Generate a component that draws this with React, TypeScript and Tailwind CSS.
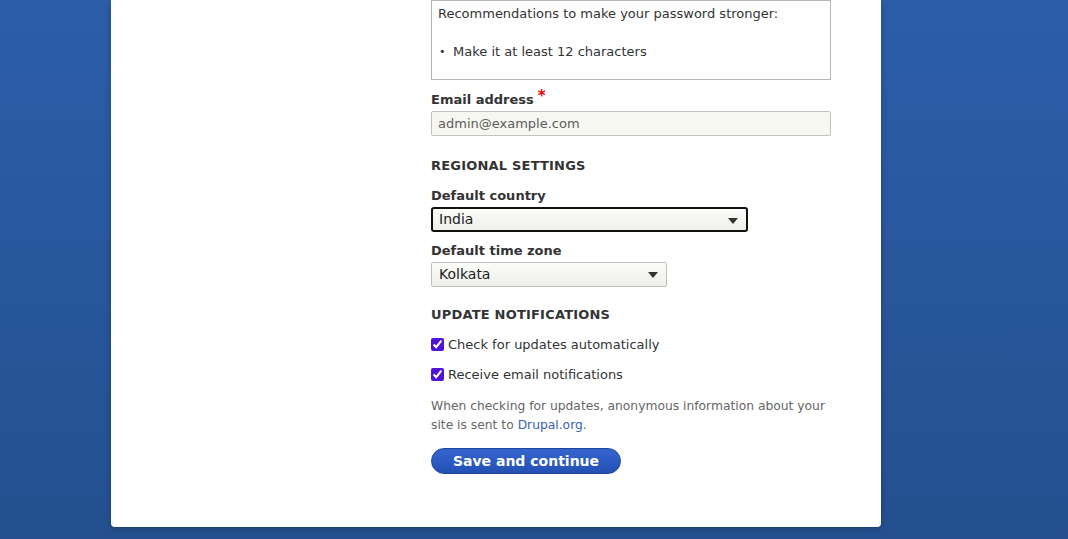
import React from "react";

const Arrow = () => (
  <svg width="10" height="6" viewBox="0 0 10 6" className="absolute right-[8px] top-[9px]">
    <path d="M0 0 L10 0 L5 6 Z" fill="#333" />
  </svg>
);

export default function App() {
  return (
    <div
      className="min-h-[539px] w-full bg-gradient-to-b from-[#2c5ea9] to-[#24508f] pb-[12px]"
      style={{ fontFamily: "'DejaVu Sans', 'Liberation Sans', sans-serif" }}
    >
      <div className="ml-[111px] w-[770px] rounded-b-[4px] bg-white pb-[53px] pl-[320px] shadow-[0_1px_6px_rgba(0,0,0,0.25)]">
        <div className="w-[400px] text-[13px] text-[#333]">
          {/* password recommendations */}
          <div className="h-[80px] border border-[#b4b4b4] px-[6px] pt-[3px] leading-[20px]">
            <p>Recommendations to make your password stronger:</p>
            <ul className="mt-[18px]">
              <li className="flex">
                <span className="ml-[1px] w-[14px] text-[11px]">•</span>
                <span>Make it at least 12 characters</span>
              </li>
            </ul>
          </div>

          {/* email */}
          <div className="mt-[11px] flex h-[18px] items-center font-bold leading-[18px]">
            Email address
            <span className="relative top-[-4px] ml-[4px] text-[15px] font-bold text-[#e00]">*</span>
          </div>
          <div className="mt-[2px] flex h-[25px] w-[400px] items-center rounded-[2px] border border-[#c2c2bd] bg-[#f7f7f2] px-[6px] text-[#5c5c5c]">
            admin@example.com
          </div>

          <div className="mt-[21px] h-[18px] font-bold uppercase leading-[18px] tracking-[0.2px]">
            Regional settings
          </div>

          <div className="mt-[12px] h-[18px] font-bold leading-[18px]">Default country</div>
          <div className="relative mt-[2px] flex h-[25px] w-[317px] items-center rounded-[3px] border-2 border-[#111] bg-gradient-to-b from-[#fcfcfa] to-[#eeeeea] px-[6px] text-[14px] text-[#222]">
            India
            <Arrow />
          </div>

          <div className="mt-[10px] h-[18px] font-bold leading-[18px]">Default time zone</div>
          <div className="relative mt-[2px] flex h-[25px] w-[236px] items-center rounded-[2px] border border-[#c0c0bb] bg-gradient-to-b from-[#fcfcfa] to-[#eeeeea] px-[7px] text-[14px] text-[#222]">
            Kolkata
            <Arrow />
          </div>

          <div className="mt-[19px] h-[18px] font-bold uppercase leading-[18px] tracking-[0.2px]">
            Update notifications
          </div>

          <label className="mt-[12px] flex h-[18px] items-center gap-[4px] leading-[18px]">
            <input type="checkbox" defaultChecked className="relative top-[-1px] m-0 h-[13px] w-[13px] accent-[#4f12d9]" />
            Check for updates automatically
          </label>
          <label className="mt-[12px] flex h-[18px] items-center gap-[4px] leading-[18px]">
            <input type="checkbox" defaultChecked className="relative top-[-1px] m-0 h-[13px] w-[13px] accent-[#4f12d9]" />
            Receive email notifications
          </label>

          <p className="mt-[13px] text-[12.3px] leading-[19px] text-[#666]">
            When checking for updates, anonymous information about your site is sent to{" "}
            <a className="text-[#3a62b6]">Drupal.org</a>.
          </p>

          <button className="mt-[13px] h-[26px] w-[190px] rounded-full border border-[#1d469c] bg-gradient-to-b from-[#3466cf] to-[#2450b4] text-[14px] font-bold text-white">
            Save and continue
          </button>
        </div>
      </div>
    </div>
  );
}
